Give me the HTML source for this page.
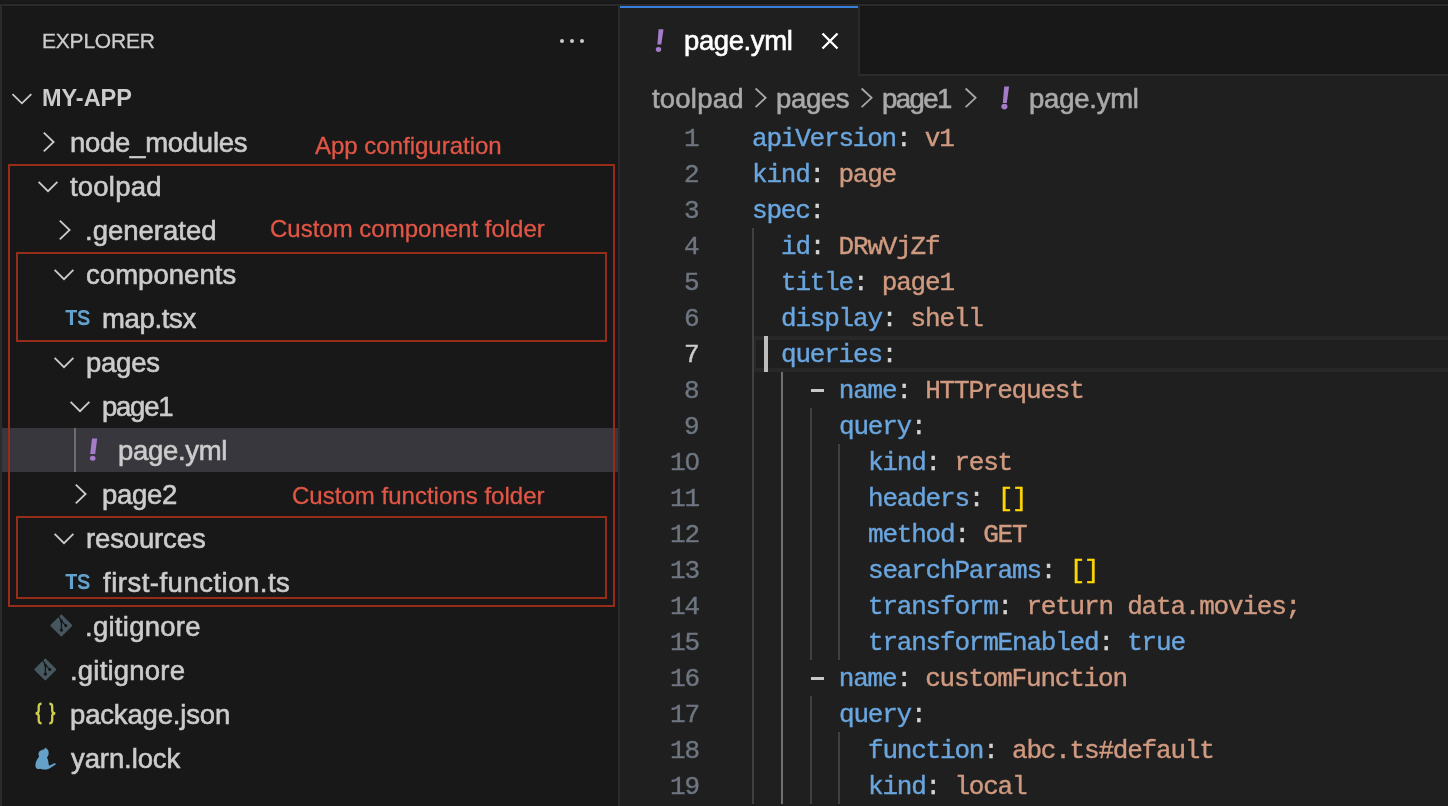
<!DOCTYPE html><html><head><meta charset="utf-8"><style>html,body{margin:0;padding:0;width:1448px;height:806px;overflow:hidden;background:#1f1f1f;position:relative}div{box-sizing:border-box}</style></head><body>
<div style="position:absolute;left:0px;top:0px;width:1448px;height:3px;background:#1a1a1a;"></div>
<div style="position:absolute;left:0px;top:3px;width:1448px;height:1px;background:#161616;"></div>
<div style="position:absolute;left:0px;top:4px;width:1448px;height:2px;background:#2b2b2b;"></div>
<div style="position:absolute;left:0px;top:6px;width:2px;height:800px;background:#2b2b2b;"></div>
<div style="position:absolute;left:2px;top:6px;width:616px;height:800px;background:#181818;"></div>
<div style="position:absolute;left:618px;top:6px;width:2px;height:800px;background:#2b2b2b;"></div>
<div style="position:absolute;left:620px;top:6px;width:828px;height:70px;background:#181818;"></div>
<div style="position:absolute;left:620px;top:74px;width:828px;height:2px;background:#2b2b2b;"></div>
<div style="position:absolute;left:620px;top:6px;width:238px;height:70px;background:#1f1f1f;"></div>
<div style="position:absolute;left:620px;top:6px;width:238px;height:2px;background:#3880dc;"></div>
<div style="position:absolute;left:858px;top:6px;width:2px;height:70px;background:#2b2b2b;"></div>
<div style="position:absolute;left:559.7px;top:38.7px;width:4.6px;height:4.6px;border-radius:50%;background:#cccccc"></div>
<div style="position:absolute;left:569.7px;top:38.7px;width:4.6px;height:4.6px;border-radius:50%;background:#cccccc"></div>
<div style="position:absolute;left:579.7px;top:38.7px;width:4.6px;height:4.6px;border-radius:50%;background:#cccccc"></div>
<div style="position:absolute;left:2px;top:428px;width:616px;height:44px;background:#37373d;"></div>
<div style="position:absolute;left:74px;top:428px;width:2px;height:44px;background:#6e6e6e;"></div>
<div style="position:absolute;left:8px;top:164px;width:607px;height:443px;border:2px solid #982c1a"></div>
<div style="position:absolute;left:16px;top:252px;width:591px;height:90px;border:2px solid #982c1a"></div>
<div style="position:absolute;left:16px;top:516px;width:591px;height:83px;border:2px solid #982c1a"></div>
<div style="position:absolute;left:752px;top:336px;width:696px;height:36px;border:4px solid #282828;border-right:none"></div>
<div style="position:absolute;left:752px;top:228px;width:2px;height:576px;background:#404040;"></div>
<div style="position:absolute;left:781px;top:372px;width:2px;height:432px;background:#707070;"></div>
<div style="position:absolute;left:810px;top:408px;width:2px;height:252px;background:#404040;"></div>
<div style="position:absolute;left:810px;top:696px;width:2px;height:108px;background:#404040;"></div>
<div style="position:absolute;left:838px;top:444px;width:2px;height:216px;background:#404040;"></div>
<div style="position:absolute;left:838px;top:732px;width:2px;height:72px;background:#404040;"></div>
<div style="position:absolute;left:811px;top:389px;width:13px;height:3px;background:#c8c8c8;"></div>
<div style="position:absolute;left:811px;top:677px;width:13px;height:3px;background:#c8c8c8;"></div>
<div style="position:absolute;left:764px;top:336px;width:4px;height:36px;background:#bebebe;"></div>
<div style="position:absolute;left:684.2px;top:125.33px;font-family:'Liberation Mono', monospace;font-size:26px;line-height:29.466px;color:#6e7681;font-weight:normal;letter-spacing:-1.2026px;white-space:pre;will-change:transform;-webkit-text-stroke-width:0.4px;">1</div>
<div style="position:absolute;left:752.4px;top:125.33px;font-family:'Liberation Mono', monospace;font-size:26px;line-height:29.466px;color:#d4d4d4;font-weight:normal;letter-spacing:-1.2026px;white-space:pre;will-change:transform;-webkit-text-stroke-width:0.4px;"><span style="color:#6aa5de">apiVersion</span><span style="color:#d4d4d4">:</span><span style="color:#d4d4d4"> </span><span style="color:#d09a80">v1</span></div>
<div style="position:absolute;left:684.2px;top:161.33px;font-family:'Liberation Mono', monospace;font-size:26px;line-height:29.466px;color:#6e7681;font-weight:normal;letter-spacing:-1.2026px;white-space:pre;will-change:transform;-webkit-text-stroke-width:0.4px;">2</div>
<div style="position:absolute;left:752.4px;top:161.33px;font-family:'Liberation Mono', monospace;font-size:26px;line-height:29.466px;color:#d4d4d4;font-weight:normal;letter-spacing:-1.2026px;white-space:pre;will-change:transform;-webkit-text-stroke-width:0.4px;"><span style="color:#6aa5de">kind</span><span style="color:#d4d4d4">:</span><span style="color:#d09a80"> page</span></div>
<div style="position:absolute;left:684.2px;top:197.33px;font-family:'Liberation Mono', monospace;font-size:26px;line-height:29.466px;color:#6e7681;font-weight:normal;letter-spacing:-1.2026px;white-space:pre;will-change:transform;-webkit-text-stroke-width:0.4px;">3</div>
<div style="position:absolute;left:752.4px;top:197.33px;font-family:'Liberation Mono', monospace;font-size:26px;line-height:29.466px;color:#d4d4d4;font-weight:normal;letter-spacing:-1.2026px;white-space:pre;will-change:transform;-webkit-text-stroke-width:0.4px;"><span style="color:#6aa5de">spec</span><span style="color:#d4d4d4">:</span></div>
<div style="position:absolute;left:684.2px;top:233.33px;font-family:'Liberation Mono', monospace;font-size:26px;line-height:29.466px;color:#6e7681;font-weight:normal;letter-spacing:-1.2026px;white-space:pre;will-change:transform;-webkit-text-stroke-width:0.4px;">4</div>
<div style="position:absolute;left:781.1999999999999px;top:233.33px;font-family:'Liberation Mono', monospace;font-size:26px;line-height:29.466px;color:#d4d4d4;font-weight:normal;letter-spacing:-1.2026px;white-space:pre;will-change:transform;-webkit-text-stroke-width:0.4px;"><span style="color:#6aa5de">id</span><span style="color:#d4d4d4">:</span><span style="color:#d09a80"> DRwVjZf</span></div>
<div style="position:absolute;left:684.2px;top:269.33px;font-family:'Liberation Mono', monospace;font-size:26px;line-height:29.466px;color:#6e7681;font-weight:normal;letter-spacing:-1.2026px;white-space:pre;will-change:transform;-webkit-text-stroke-width:0.4px;">5</div>
<div style="position:absolute;left:781.1999999999999px;top:269.33px;font-family:'Liberation Mono', monospace;font-size:26px;line-height:29.466px;color:#d4d4d4;font-weight:normal;letter-spacing:-1.2026px;white-space:pre;will-change:transform;-webkit-text-stroke-width:0.4px;"><span style="color:#6aa5de">title</span><span style="color:#d4d4d4">:</span><span style="color:#d09a80"> page1</span></div>
<div style="position:absolute;left:684.2px;top:305.33px;font-family:'Liberation Mono', monospace;font-size:26px;line-height:29.466px;color:#6e7681;font-weight:normal;letter-spacing:-1.2026px;white-space:pre;will-change:transform;-webkit-text-stroke-width:0.4px;">6</div>
<div style="position:absolute;left:781.1999999999999px;top:305.33px;font-family:'Liberation Mono', monospace;font-size:26px;line-height:29.466px;color:#d4d4d4;font-weight:normal;letter-spacing:-1.2026px;white-space:pre;will-change:transform;-webkit-text-stroke-width:0.4px;"><span style="color:#6aa5de">display</span><span style="color:#d4d4d4">:</span><span style="color:#d09a80"> shell</span></div>
<div style="position:absolute;left:684.2px;top:341.33px;font-family:'Liberation Mono', monospace;font-size:26px;line-height:29.466px;color:#cccccc;font-weight:normal;letter-spacing:-1.2026px;white-space:pre;will-change:transform;-webkit-text-stroke-width:0.4px;">7</div>
<div style="position:absolute;left:781.1999999999999px;top:341.33px;font-family:'Liberation Mono', monospace;font-size:26px;line-height:29.466px;color:#d4d4d4;font-weight:normal;letter-spacing:-1.2026px;white-space:pre;will-change:transform;-webkit-text-stroke-width:0.4px;"><span style="color:#6aa5de">queries</span><span style="color:#d4d4d4">:</span></div>
<div style="position:absolute;left:684.2px;top:377.33px;font-family:'Liberation Mono', monospace;font-size:26px;line-height:29.466px;color:#6e7681;font-weight:normal;letter-spacing:-1.2026px;white-space:pre;will-change:transform;-webkit-text-stroke-width:0.4px;">8</div>
<div style="position:absolute;left:810.0px;top:377.33px;font-family:'Liberation Mono', monospace;font-size:26px;line-height:29.466px;color:#d4d4d4;font-weight:normal;letter-spacing:-1.2026px;white-space:pre;will-change:transform;-webkit-text-stroke-width:0.4px;"><span style="color:#d4d4d4"> </span><span style="color:#6aa5de"> name</span><span style="color:#d4d4d4">:</span><span style="color:#d09a80"> HTTPrequest</span></div>
<div style="position:absolute;left:684.2px;top:413.33px;font-family:'Liberation Mono', monospace;font-size:26px;line-height:29.466px;color:#6e7681;font-weight:normal;letter-spacing:-1.2026px;white-space:pre;will-change:transform;-webkit-text-stroke-width:0.4px;">9</div>
<div style="position:absolute;left:838.8px;top:413.33px;font-family:'Liberation Mono', monospace;font-size:26px;line-height:29.466px;color:#d4d4d4;font-weight:normal;letter-spacing:-1.2026px;white-space:pre;will-change:transform;-webkit-text-stroke-width:0.4px;"><span style="color:#6aa5de">query</span><span style="color:#d4d4d4">:</span></div>
<div style="position:absolute;left:669.8000000000001px;top:449.33px;font-family:'Liberation Mono', monospace;font-size:26px;line-height:29.466px;color:#6e7681;font-weight:normal;letter-spacing:-1.2026px;white-space:pre;will-change:transform;-webkit-text-stroke-width:0.4px;">10</div>
<div style="position:absolute;left:867.6px;top:449.33px;font-family:'Liberation Mono', monospace;font-size:26px;line-height:29.466px;color:#d4d4d4;font-weight:normal;letter-spacing:-1.2026px;white-space:pre;will-change:transform;-webkit-text-stroke-width:0.4px;"><span style="color:#6aa5de">kind</span><span style="color:#d4d4d4">:</span><span style="color:#d09a80"> rest</span></div>
<div style="position:absolute;left:669.8000000000001px;top:485.33px;font-family:'Liberation Mono', monospace;font-size:26px;line-height:29.466px;color:#6e7681;font-weight:normal;letter-spacing:-1.2026px;white-space:pre;will-change:transform;-webkit-text-stroke-width:0.4px;">11</div>
<div style="position:absolute;left:867.6px;top:485.33px;font-family:'Liberation Mono', monospace;font-size:26px;line-height:29.466px;color:#d4d4d4;font-weight:normal;letter-spacing:-1.2026px;white-space:pre;will-change:transform;-webkit-text-stroke-width:0.4px;"><span style="color:#6aa5de">headers</span><span style="color:#d4d4d4">:</span><span style="color:#d4d4d4"> </span><span style="color:#ffd700">[]</span></div>
<div style="position:absolute;left:669.8000000000001px;top:521.33px;font-family:'Liberation Mono', monospace;font-size:26px;line-height:29.466px;color:#6e7681;font-weight:normal;letter-spacing:-1.2026px;white-space:pre;will-change:transform;-webkit-text-stroke-width:0.4px;">12</div>
<div style="position:absolute;left:867.6px;top:521.33px;font-family:'Liberation Mono', monospace;font-size:26px;line-height:29.466px;color:#d4d4d4;font-weight:normal;letter-spacing:-1.2026px;white-space:pre;will-change:transform;-webkit-text-stroke-width:0.4px;"><span style="color:#6aa5de">method</span><span style="color:#d4d4d4">:</span><span style="color:#d09a80"> GET</span></div>
<div style="position:absolute;left:669.8000000000001px;top:557.33px;font-family:'Liberation Mono', monospace;font-size:26px;line-height:29.466px;color:#6e7681;font-weight:normal;letter-spacing:-1.2026px;white-space:pre;will-change:transform;-webkit-text-stroke-width:0.4px;">13</div>
<div style="position:absolute;left:867.6px;top:557.33px;font-family:'Liberation Mono', monospace;font-size:26px;line-height:29.466px;color:#d4d4d4;font-weight:normal;letter-spacing:-1.2026px;white-space:pre;will-change:transform;-webkit-text-stroke-width:0.4px;"><span style="color:#6aa5de">searchParams</span><span style="color:#d4d4d4">:</span><span style="color:#d4d4d4"> </span><span style="color:#ffd700">[]</span></div>
<div style="position:absolute;left:669.8000000000001px;top:593.33px;font-family:'Liberation Mono', monospace;font-size:26px;line-height:29.466px;color:#6e7681;font-weight:normal;letter-spacing:-1.2026px;white-space:pre;will-change:transform;-webkit-text-stroke-width:0.4px;">14</div>
<div style="position:absolute;left:867.6px;top:593.33px;font-family:'Liberation Mono', monospace;font-size:26px;line-height:29.466px;color:#d4d4d4;font-weight:normal;letter-spacing:-1.2026px;white-space:pre;will-change:transform;-webkit-text-stroke-width:0.4px;"><span style="color:#6aa5de">transform</span><span style="color:#d4d4d4">:</span><span style="color:#d09a80"> return data.movies;</span></div>
<div style="position:absolute;left:669.8000000000001px;top:629.33px;font-family:'Liberation Mono', monospace;font-size:26px;line-height:29.466px;color:#6e7681;font-weight:normal;letter-spacing:-1.2026px;white-space:pre;will-change:transform;-webkit-text-stroke-width:0.4px;">15</div>
<div style="position:absolute;left:867.6px;top:629.33px;font-family:'Liberation Mono', monospace;font-size:26px;line-height:29.466px;color:#d4d4d4;font-weight:normal;letter-spacing:-1.2026px;white-space:pre;will-change:transform;-webkit-text-stroke-width:0.4px;"><span style="color:#6aa5de">transformEnabled</span><span style="color:#d4d4d4">:</span><span style="color:#d4d4d4"> </span><span style="color:#6aa5de">true</span></div>
<div style="position:absolute;left:669.8000000000001px;top:665.33px;font-family:'Liberation Mono', monospace;font-size:26px;line-height:29.466px;color:#6e7681;font-weight:normal;letter-spacing:-1.2026px;white-space:pre;will-change:transform;-webkit-text-stroke-width:0.4px;">16</div>
<div style="position:absolute;left:810.0px;top:665.33px;font-family:'Liberation Mono', monospace;font-size:26px;line-height:29.466px;color:#d4d4d4;font-weight:normal;letter-spacing:-1.2026px;white-space:pre;will-change:transform;-webkit-text-stroke-width:0.4px;"><span style="color:#d4d4d4"> </span><span style="color:#6aa5de"> name</span><span style="color:#d4d4d4">:</span><span style="color:#d09a80"> customFunction</span></div>
<div style="position:absolute;left:669.8000000000001px;top:701.33px;font-family:'Liberation Mono', monospace;font-size:26px;line-height:29.466px;color:#6e7681;font-weight:normal;letter-spacing:-1.2026px;white-space:pre;will-change:transform;-webkit-text-stroke-width:0.4px;">17</div>
<div style="position:absolute;left:838.8px;top:701.33px;font-family:'Liberation Mono', monospace;font-size:26px;line-height:29.466px;color:#d4d4d4;font-weight:normal;letter-spacing:-1.2026px;white-space:pre;will-change:transform;-webkit-text-stroke-width:0.4px;"><span style="color:#6aa5de">query</span><span style="color:#d4d4d4">:</span></div>
<div style="position:absolute;left:669.8000000000001px;top:737.33px;font-family:'Liberation Mono', monospace;font-size:26px;line-height:29.466px;color:#6e7681;font-weight:normal;letter-spacing:-1.2026px;white-space:pre;will-change:transform;-webkit-text-stroke-width:0.4px;">18</div>
<div style="position:absolute;left:867.6px;top:737.33px;font-family:'Liberation Mono', monospace;font-size:26px;line-height:29.466px;color:#d4d4d4;font-weight:normal;letter-spacing:-1.2026px;white-space:pre;will-change:transform;-webkit-text-stroke-width:0.4px;"><span style="color:#6aa5de">function</span><span style="color:#d4d4d4">:</span><span style="color:#d09a80"> abc.ts#default</span></div>
<div style="position:absolute;left:669.8000000000001px;top:773.33px;font-family:'Liberation Mono', monospace;font-size:26px;line-height:29.466px;color:#6e7681;font-weight:normal;letter-spacing:-1.2026px;white-space:pre;will-change:transform;-webkit-text-stroke-width:0.4px;">19</div>
<div style="position:absolute;left:867.6px;top:773.33px;font-family:'Liberation Mono', monospace;font-size:26px;line-height:29.466px;color:#d4d4d4;font-weight:normal;letter-spacing:-1.2026px;white-space:pre;will-change:transform;-webkit-text-stroke-width:0.4px;"><span style="color:#6aa5de">kind</span><span style="color:#d4d4d4">:</span><span style="color:#d09a80"> local</span></div>
<div style="position:absolute;left:690px;top:458px;width:4.2px;height:6px;background:#1f1f1f;"></div>
<div style="position:absolute;left:42.30px;top:29px;font-family:'Liberation Sans', sans-serif;font-size:21px;line-height:23.457px;color:#cccccc;font-weight:normal;letter-spacing:-0.214px;white-space:pre;will-change:transform;-webkit-text-stroke-width:0.3px;">EXPLORER</div>
<div style="position:absolute;left:41.70px;top:85px;font-family:'Liberation Sans', sans-serif;font-size:23.5px;line-height:26.250px;color:#cccccc;font-weight:bold;letter-spacing:-0.040px;white-space:pre;will-change:transform;">MY-APP</div>
<div style="position:absolute;left:70.30px;top:128px;font-family:'Liberation Sans', sans-serif;font-size:27.5px;line-height:30.718px;color:#cccccc;font-weight:normal;letter-spacing:-0.264px;white-space:pre;will-change:transform;-webkit-text-stroke-width:0.6px;">node_modules</div>
<div style="position:absolute;left:70.40px;top:172px;font-family:'Liberation Sans', sans-serif;font-size:27.5px;line-height:30.718px;color:#cccccc;font-weight:normal;letter-spacing:0.200px;white-space:pre;will-change:transform;-webkit-text-stroke-width:0.6px;">toolpad</div>
<div style="position:absolute;left:85.30px;top:216px;font-family:'Liberation Sans', sans-serif;font-size:27.5px;line-height:30.718px;color:#cccccc;font-weight:normal;letter-spacing:0.011px;white-space:pre;will-change:transform;-webkit-text-stroke-width:0.6px;">.generated</div>
<div style="position:absolute;left:85.80px;top:260px;font-family:'Liberation Sans', sans-serif;font-size:27.5px;line-height:30.718px;color:#cccccc;font-weight:normal;letter-spacing:0.044px;white-space:pre;will-change:transform;-webkit-text-stroke-width:0.6px;">components</div>
<div style="position:absolute;left:102.00px;top:304px;font-family:'Liberation Sans', sans-serif;font-size:27.5px;line-height:30.718px;color:#cccccc;font-weight:normal;letter-spacing:-0.333px;white-space:pre;will-change:transform;-webkit-text-stroke-width:0.6px;">map.tsx</div>
<div style="position:absolute;left:85.80px;top:348px;font-family:'Liberation Sans', sans-serif;font-size:27.5px;line-height:30.718px;color:#cccccc;font-weight:normal;letter-spacing:-0.250px;white-space:pre;will-change:transform;-webkit-text-stroke-width:0.6px;">pages</div>
<div style="position:absolute;left:102.00px;top:392px;font-family:'Liberation Sans', sans-serif;font-size:27.5px;line-height:30.718px;color:#cccccc;font-weight:normal;letter-spacing:-1.250px;white-space:pre;will-change:transform;-webkit-text-stroke-width:0.6px;">page1</div>
<div style="position:absolute;left:118.00px;top:436px;font-family:'Liberation Sans', sans-serif;font-size:27.5px;line-height:30.718px;color:#cccccc;font-weight:normal;letter-spacing:-0.314px;white-space:pre;will-change:transform;-webkit-text-stroke-width:0.6px;">page.yml</div>
<div style="position:absolute;left:102.00px;top:480px;font-family:'Liberation Sans', sans-serif;font-size:27.5px;line-height:30.718px;color:#cccccc;font-weight:normal;letter-spacing:-0.325px;white-space:pre;will-change:transform;-webkit-text-stroke-width:0.6px;">page2</div>
<div style="position:absolute;left:85.80px;top:524px;font-family:'Liberation Sans', sans-serif;font-size:27.5px;line-height:30.718px;color:#cccccc;font-weight:normal;letter-spacing:-0.138px;white-space:pre;will-change:transform;-webkit-text-stroke-width:0.6px;">resources</div>
<div style="position:absolute;left:103.00px;top:568px;font-family:'Liberation Sans', sans-serif;font-size:27.5px;line-height:30.718px;color:#cccccc;font-weight:normal;letter-spacing:0.500px;white-space:pre;will-change:transform;-webkit-text-stroke-width:0.6px;">first-function.ts</div>
<div style="position:absolute;left:84.90px;top:612px;font-family:'Liberation Sans', sans-serif;font-size:27.5px;line-height:30.718px;color:#cccccc;font-weight:normal;letter-spacing:0.267px;white-space:pre;will-change:transform;-webkit-text-stroke-width:0.6px;">.gitignore</div>
<div style="position:absolute;left:69.60px;top:656px;font-family:'Liberation Sans', sans-serif;font-size:27.5px;line-height:30.718px;color:#cccccc;font-weight:normal;letter-spacing:0.211px;white-space:pre;will-change:transform;-webkit-text-stroke-width:0.6px;">.gitignore</div>
<div style="position:absolute;left:70.00px;top:700px;font-family:'Liberation Sans', sans-serif;font-size:27.5px;line-height:30.718px;color:#cccccc;font-weight:normal;letter-spacing:-0.164px;white-space:pre;will-change:transform;-webkit-text-stroke-width:0.6px;">package.json</div>
<div style="position:absolute;left:71.00px;top:744px;font-family:'Liberation Sans', sans-serif;font-size:27.5px;line-height:30.718px;color:#cccccc;font-weight:normal;letter-spacing:-0.100px;white-space:pre;will-change:transform;-webkit-text-stroke-width:0.6px;">yarn.lock</div>
<div style="position:absolute;left:315.10px;top:133px;font-family:'Liberation Sans', sans-serif;font-size:24px;line-height:26.808px;color:#e25646;font-weight:normal;letter-spacing:-0.006px;white-space:pre;will-change:transform;-webkit-text-stroke-width:0.3px;">App configuration</div>
<div style="position:absolute;left:270.40px;top:216px;font-family:'Liberation Sans', sans-serif;font-size:24px;line-height:26.808px;color:#e25646;font-weight:normal;letter-spacing:0.000px;white-space:pre;will-change:transform;-webkit-text-stroke-width:0.3px;">Custom component folder</div>
<div style="position:absolute;left:292.30px;top:483px;font-family:'Liberation Sans', sans-serif;font-size:24px;line-height:26.808px;color:#e25646;font-weight:normal;letter-spacing:0.018px;white-space:pre;will-change:transform;-webkit-text-stroke-width:0.3px;">Custom functions folder</div>
<div style="position:absolute;left:684.10px;top:26px;font-family:'Liberation Sans', sans-serif;font-size:27.5px;line-height:30.718px;color:#ffffff;font-weight:normal;letter-spacing:-0.400px;white-space:pre;will-change:transform;-webkit-text-stroke-width:0.6px;">page.yml</div>
<div style="position:absolute;left:652.30px;top:84px;font-family:'Liberation Sans', sans-serif;font-size:27.5px;line-height:30.718px;color:#a9a9a9;font-weight:normal;letter-spacing:0.200px;white-space:pre;will-change:transform;-webkit-text-stroke-width:0.6px;">toolpad</div>
<div style="position:absolute;left:776.10px;top:84px;font-family:'Liberation Sans', sans-serif;font-size:27.5px;line-height:30.718px;color:#a9a9a9;font-weight:normal;letter-spacing:-0.350px;white-space:pre;will-change:transform;-webkit-text-stroke-width:0.6px;">pages</div>
<div style="position:absolute;left:882.20px;top:84px;font-family:'Liberation Sans', sans-serif;font-size:27.5px;line-height:30.718px;color:#a9a9a9;font-weight:normal;letter-spacing:-1.550px;white-space:pre;will-change:transform;-webkit-text-stroke-width:0.6px;">page1</div>
<div style="position:absolute;left:1029.30px;top:84px;font-family:'Liberation Sans', sans-serif;font-size:27.5px;line-height:30.718px;color:#a9a9a9;font-weight:normal;letter-spacing:-0.229px;white-space:pre;will-change:transform;-webkit-text-stroke-width:0.6px;">page.yml</div>
<svg style="position:absolute;left:0;top:0" width="1448" height="806" viewBox="0 0 1448 806"><polyline points="12.499999999999998,94.05 21.9,103.35000000000001 31.299999999999997,94.05" fill="none" stroke="#cccccc" stroke-width="1.8"/><polyline points="43.800000000000004,132.7 53.6,142 43.800000000000004,151.3" fill="none" stroke="#cccccc" stroke-width="1.8"/><polyline points="38.6,181.85 48,191.15 57.4,181.85" fill="none" stroke="#cccccc" stroke-width="1.8"/><polyline points="59.800000000000004,220.7 69.60000000000001,230 59.800000000000004,239.3" fill="none" stroke="#cccccc" stroke-width="1.8"/><polyline points="54.6,269.85 64,279.15 73.4,269.85" fill="none" stroke="#cccccc" stroke-width="1.8"/><polyline points="54.6,357.85 64,367.15 73.4,357.85" fill="none" stroke="#cccccc" stroke-width="1.8"/><polyline points="70.6,401.85 80,411.15 89.4,401.85" fill="none" stroke="#cccccc" stroke-width="1.8"/><polyline points="75.8,484.7 85.60000000000001,494 75.8,503.3" fill="none" stroke="#cccccc" stroke-width="1.8"/><polyline points="54.6,533.85 64,543.15 73.4,533.85" fill="none" stroke="#cccccc" stroke-width="1.8"/><polygon points="658.6,29.2 663.5,29.2 661.3,44.6 657.4,44.6" fill="#a47cca"/><ellipse cx="658.5" cy="49.5" rx="2.7" ry="2.4" fill="#a47cca"/><path d="M822.5 33.5 L837.5 48.5 M837.5 33.5 L822.5 48.5" stroke="#ffffff" stroke-width="2.4" fill="none"/><polyline points="755.6,88.5 765.6,97.8 755.6,107.1" fill="none" stroke="#a9a9a9" stroke-width="1.8"/><polyline points="861.6,88.5 871.6,97.8 861.6,107.1" fill="none" stroke="#a9a9a9" stroke-width="1.8"/><polyline points="965.6,88.5 975.6,97.8 965.6,107.1" fill="none" stroke="#a9a9a9" stroke-width="1.8"/><polygon points="1004.2,86.6 1009.1,86.6 1006.8,102.9 1002.8,102.9" fill="#a47cca"/><ellipse cx="1004.4" cy="106.6" rx="3.1" ry="2.8" fill="#a47cca"/><g transform="translate(0,0)"><rect x="65.5" y="310" width="11.5" height="2.4" fill="#64a2ce"/><rect x="69.9" y="310" width="3.1" height="15" fill="#64a2ce"/><path d="M88.3,314.3 C87.9,312.2 86,311.3 83.7,311.3 C81.2,311.3 79.4,312.6 79.4,314.4 C79.4,316.6 81.6,317.2 83.9,317.8 C86.4,318.4 88.3,319.3 88.3,321.2 C88.3,323.2 86.2,323.9 83.7,323.9 C81.2,323.9 79.4,323 79.1,320.8" fill="none" stroke="#64a2ce" stroke-width="2.6"/></g><g transform="translate(0,264)"><rect x="65.5" y="310" width="11.5" height="2.4" fill="#64a2ce"/><rect x="69.9" y="310" width="3.1" height="15" fill="#64a2ce"/><path d="M88.3,314.3 C87.9,312.2 86,311.3 83.7,311.3 C81.2,311.3 79.4,312.6 79.4,314.4 C79.4,316.6 81.6,317.2 83.9,317.8 C86.4,318.4 88.3,319.3 88.3,321.2 C88.3,323.2 86.2,323.9 83.7,323.9 C81.2,323.9 79.4,323 79.1,320.8" fill="none" stroke="#64a2ce" stroke-width="2.6"/></g><polygon points="92,438.4 97.2,438.4 95.2,454 90.2,454" fill="#a47cca"/><ellipse cx="92.7" cy="458.2" rx="2.8" ry="2.5" fill="#a47cca"/><g transform="translate(61.3,625.5)"><path d="M0,-9.8 L9.8,0 L0,9.8 L-9.8,0 Z" fill="#465760" stroke="#465760" stroke-width="2.2" stroke-linejoin="round"/><path d="M-3.7,-11 L0.1,-4.6 L0.1,4.5 M0.1,-4.6 L4.5,0.1" stroke="#181818" stroke-width="1.3" fill="none"/><circle cx="0.1" cy="-4.6" r="1.5" fill="#181818"/><circle cx="4.5" cy="0.1" r="1.6" fill="#181818"/><circle cx="0.1" cy="4.6" r="1.7" fill="#181818"/></g><g transform="translate(45.3,669.5)"><path d="M0,-9.8 L9.8,0 L0,9.8 L-9.8,0 Z" fill="#465760" stroke="#465760" stroke-width="2.2" stroke-linejoin="round"/><path d="M-3.7,-11 L0.1,-4.6 L0.1,4.5 M0.1,-4.6 L4.5,0.1" stroke="#181818" stroke-width="1.3" fill="none"/><circle cx="0.1" cy="-4.6" r="1.5" fill="#181818"/><circle cx="4.5" cy="0.1" r="1.6" fill="#181818"/><circle cx="0.1" cy="4.6" r="1.7" fill="#181818"/></g><path d="M41.6,703.6 C39.6,703.6 38.7,704.6 38.7,706.6 L38.7,710.6 C38.7,712.4 37.6,713.3 35.6,713.3 C37.6,713.3 38.7,714.2 38.7,716 L38.7,720.2 C38.7,722.2 39.6,723.3 41.6,723.3" fill="none" stroke="#cdcd4e" stroke-width="2.3"/><path d="M49.3,703.6 C51.3,703.6 52.2,704.6 52.2,706.6 L52.2,710.6 C52.2,712.4 53.3,713.3 55.3,713.3 C53.3,713.3 52.2,714.2 52.2,716 L52.2,720.2 C52.2,722.2 51.3,723.3 49.3,723.3" fill="none" stroke="#cdcd4e" stroke-width="2.3"/><path d="M45.4,747.6 L47.5,749.4 C48.6,750.2 48.8,752.5 48.6,754.3 C48.4,755.8 47.3,756.8 46.9,757.6 C47.8,758.8 48.6,761.5 48.6,764.3 L49.3,765.8 L54.2,763.2 C55.2,762.9 56,763.7 55.7,764.5 L49.4,768.4 C47.5,769.4 45,769.6 43,769.5 L40,768.8 C39.5,769.4 37.2,769 36.7,768.4 C35.5,767.5 35.2,766 35.4,765 C35.8,762 36.5,760 37.6,758.7 C38.5,757.6 39.2,756.5 38.9,755.8 C38.3,754.5 38.3,752.8 38.9,752.4 C39.5,751.3 40.2,750.8 40.8,750.6 C41.8,749.8 43,749.4 43.8,749.4 L44.5,749 Z" fill="#64a0c8"/></svg>
</body></html>
